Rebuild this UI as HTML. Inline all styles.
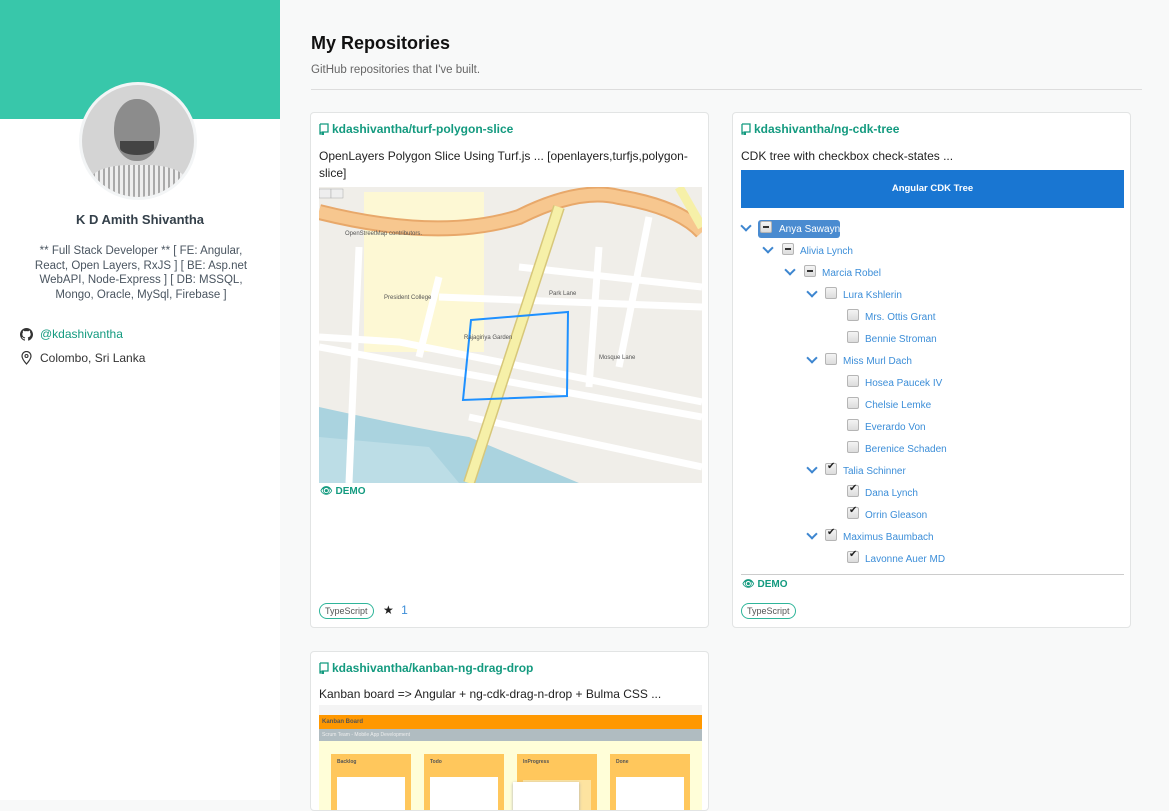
<!DOCTYPE html>
<html><head><meta charset="utf-8">
<style>
*{margin:0;padding:0;box-sizing:border-box}
body{width:1169px;height:800px;overflow:hidden;background:#f8f9f9;font-family:"Liberation Sans",sans-serif;position:relative;color:#222}
.abs{position:absolute}
.side{left:0;top:0;width:280px;height:800px;background:#fff}
.teal{left:0;top:0;width:280px;height:119px;background:#38c7aa}
.card{position:absolute;background:#fff;border:1px solid #e2e4e4;border-radius:4px;overflow:hidden}
.ttl{position:absolute;left:8px;top:9px;font-size:12px;font-weight:bold;color:#139a7f}
.ttl svg{vertical-align:-2px;margin-right:3px}
.desc{position:absolute;left:8px;font-size:12px;line-height:17px;color:#222}
.tag{position:absolute;font-size:9px;color:#555;border:1px solid #2fb59a;border-radius:9px;padding:2px 5px}
.demo{position:absolute;font-size:10px;font-weight:bold;color:#139a7f}
.row{position:absolute;height:16px;font-size:10px;color:#3c8ed8;line-height:14px;white-space:nowrap}
.cb{position:absolute;width:12px;height:12px;border:1px solid #b5b5b5;border-radius:2px;background:linear-gradient(#f4f4f4,#dcdcdc)}
.cb.ind:after{content:"";position:absolute;left:2px;top:4px;width:6px;height:2px;background:#333}
.cb.chk:after{content:"✔";position:absolute;left:1px;top:-3px;font-size:10px;color:#222}
.chev{position:absolute;width:8px;height:8px;border-right:2px solid #3d86d0;border-bottom:2px solid #3d86d0;transform:rotate(45deg)}
</style></head><body>
<div class="abs side"></div>
<div class="abs teal"></div>
<div class="abs" style="left:79px;top:82px;width:118px;height:118px;border-radius:50%;background:#f3f5f6"></div>
<div class="abs" style="left:82px;top:85px;width:112px;height:112px;border-radius:50%;background:#d4d4d4;overflow:hidden">
 <div class="abs" style="left:32px;top:14px;width:46px;height:62px;border-radius:48%;background:#8c8c8c"></div>
 <div class="abs" style="left:38px;top:56px;width:34px;height:14px;border-radius:0 0 50% 50%;background:#444"></div>
 <div class="abs" style="left:8px;top:80px;width:96px;height:40px;border-radius:40% 40% 0 0;background:repeating-linear-gradient(90deg,#eee 0 3px,#aaa 3px 5px)"></div>
</div>
<div class="abs" style="left:0;width:280px;top:212px;text-align:center;font-size:13px;font-weight:bold;color:#34404a">K D Amith Shivantha</div>
<div class="abs" style="left:30px;width:222px;top:244px;text-align:center;font-size:11.5px;line-height:14.5px;color:#4a5560">** Full Stack Developer ** [ FE: Angular, React, Open Layers, RxJS ] [ BE: Asp.net WebAPI, Node-Express ] [ DB: MSSQL, Mongo, Oracle, MySql, Firebase ]</div>
<svg class="abs" style="left:20px;top:328px" width="13" height="13" viewBox="0 0 16 16"><path fill="#333" d="M8 0C3.6 0 0 3.6 0 8c0 3.5 2.3 6.5 5.5 7.6.4.1.5-.2.5-.4v-1.4c-2.2.5-2.7-1-2.7-1-.4-.9-.9-1.200-.9-1.2-.7-.5.1-.5.1-.5.8.1 1.2.8 1.2.8.7 1.2 1.9.9 2.3.7.1-.5.3-.9.5-1.1-1.8-.2-3.600-.9-3.6-4 0-.9.3-1.6.8-2.100-.1-.2-.4-1 .1-2.1 0 0 .7-.2 2.2.8.6-.2 1.3-.3 2-.3s1.4.1 2 .3c1.5-1 2.2-.8 2.2-.8.4 1.1.2 1.9.1 2.1.5.6.8 1.3.8 2.1 0 3.1-1.9 3.7-3.6 3.9.3.3.5.8.5 1.5v2.2c0 .2.1.5.6.4C13.7 14.5 16 11.5 16 8c0-4.4-3.6-8-8-8z"/></svg>
<div class="abs" style="left:40px;top:327px;font-size:12px;color:#139a7f">@kdashivantha</div>
<svg class="abs" style="left:21px;top:351px" width="11" height="14" viewBox="0 0 11 14"><path d="M5.5 13S1 8 1 5a4.5 4.5 0 0 1 9 0c0 3-4.5 8-4.5 8z" fill="none" stroke="#333" stroke-width="1.2"/><circle cx="5.5" cy="5" r="1.5" fill="none" stroke="#333" stroke-width="1.1"/></svg>
<div class="abs" style="left:40px;top:351px;font-size:12px;color:#333">Colombo, Sri Lanka</div>

<div class="abs" style="left:311px;top:33px;font-size:18px;font-weight:bold;color:#111">My Repositories</div>
<div class="abs" style="left:311px;top:64px;font-size:11.5px;color:#666">GitHub repositories that I've built.</div>
<div class="abs" style="left:311px;top:89px;width:831px;height:1px;background:#ddd"></div>

<!-- card 1 -->
<div class="card" style="left:310px;top:112px;width:399px;height:516px">
 <div class="ttl"><svg width="10" height="12" viewBox="0 0 10 12"><path d="M1 1h8v8H2.5M1 1v10h2M1 9.5h1.5" fill="none" stroke="#139a7f" stroke-width="1.3"/><rect x="3" y="9" width="2" height="3" fill="#139a7f"/></svg>kdashivantha/turf-polygon-slice</div>
 <div class="desc" style="top:35px;width:380px">OpenLayers Polygon Slice Using Turf.js ... [openlayers,turfjs,polygon-slice]</div>
 <svg class="abs" style="left:8px;top:74px" width="383" height="296" viewBox="0 0 383 296">
  <rect width="383" height="296" fill="#f0eee9"/>
  <rect x="45" y="5" width="120" height="160" fill="#fdf8d4"/>
  <path d="M0 220 Q90 240 150 250 L260 296 L0 296Z" fill="#aad3df"/>
  <path d="M0 250 L110 260 L140 296 L0 296Z" fill="#bcdde6"/>
  <g stroke="#fff" stroke-width="7" fill="none">
   <path d="M0 160 L383 230"/><path d="M0 150 L80 155 L383 215"/><path d="M120 110 L383 120"/><path d="M40 60 L30 296"/><path d="M280 60 L270 200"/><path d="M200 80 L383 100"/><path d="M100 170 L120 90"/><path d="M330 30 L300 180"/><path d="M150 230 L383 280"/>
  </g>
  <path d="M0 25 Q120 55 200 30 Q260 0 300 10 Q360 20 383 45" stroke="#e8a86a" stroke-width="16" fill="none"/>
  <path d="M0 25 Q120 55 200 30 Q260 0 300 10 Q360 20 383 45" stroke="#f7c78f" stroke-width="12" fill="none"/>
  <path d="M240 20 L150 296" stroke="#d7c77a" stroke-width="12" fill="none"/>
  <path d="M240 20 L150 296" stroke="#f6f0a8" stroke-width="9" fill="none"/>
  <path d="M360 0 L383 40" stroke="#f6f0a8" stroke-width="9" fill="none"/>
  <path d="M152 133 L249 125 L248 209 L144 213Z" fill="none" stroke="#1e90ff" stroke-width="2"/>
  <g font-size="6" fill="#555" font-family="Liberation Sans"><text x="145" y="152">Rajagiriya Garden</text><text x="65" y="112">President College</text><text x="230" y="108">Park Lane</text><text x="280" y="172">Mosque Lane</text><text x="26" y="48">OpenStreetMap contributors.</text></g>
  <rect x="0" y="2" width="12" height="9" fill="#eee" stroke="#aaa" stroke-width=".5"/><rect x="12" y="2" width="12" height="9" fill="#eee" stroke="#aaa" stroke-width=".5"/>
 </svg>
 <div class="demo" style="left:9px;top:373px">👁 DEMO</div>
 <div class="tag" style="left:8px;top:490px">TypeScript</div>
 <div class="abs" style="left:72px;top:490px;font-size:12px">★ <span style="color:#3c8ed8;margin-left:4px">1</span></div>
</div>

<!-- card 2 -->
<div class="card" style="left:732px;top:112px;width:399px;height:516px">
 <div class="ttl"><svg width="10" height="12" viewBox="0 0 10 12"><path d="M1 1h8v8H2.5M1 1v10h2M1 9.5h1.5" fill="none" stroke="#139a7f" stroke-width="1.3"/><rect x="3" y="9" width="2" height="3" fill="#139a7f"/></svg>kdashivantha/ng-cdk-tree</div>
 <div class="desc" style="top:35px">CDK tree with checkbox check-states ...</div>
 <div class="abs" style="left:8px;top:57px;width:383px;height:38px;background:#1976d2;color:#fff;font-size:9.5px;font-weight:bold;text-align:center;line-height:38px">Angular CDK Tree</div>
 <div class="abs" style="left:8px;top:461px;width:383px;height:1px;background:#ccc"></div>
 <div class="demo" style="left:9px;top:466px">👁 DEMO</div>
 <div class="tag" style="left:8px;top:490px">TypeScript</div>
</div>
<!-- tree (page coords) -->
<div class="abs" style="left:758px;top:220px;width:82px;height:18px;background:#4a8bd0;border-radius:3px"></div>
<div class="abs" style="left:0;top:0">
 <div class="chev" style="left:742px;top:222px"></div><div class="cb ind" style="left:760px;top:221px"></div><div class="row" style="left:779px;top:223px;color:#fff">Anya Sawayn</div>
 <div class="chev" style="left:764px;top:244px"></div><div class="cb ind" style="left:782px;top:243px"></div><div class="row" style="left:800px;top:245px">Alivia Lynch</div>
 <div class="chev" style="left:786px;top:266px"></div><div class="cb ind" style="left:804px;top:265px"></div><div class="row" style="left:822px;top:267px">Marcia Robel</div>
 <div class="chev" style="left:808px;top:288px"></div><div class="cb" style="left:825px;top:287px"></div><div class="row" style="left:843px;top:289px">Lura Kshlerin</div>
 <div class="cb" style="left:847px;top:309px"></div><div class="row" style="left:865px;top:311px">Mrs. Ottis Grant</div>
 <div class="cb" style="left:847px;top:331px"></div><div class="row" style="left:865px;top:333px">Bennie Stroman</div>
 <div class="chev" style="left:808px;top:354px"></div><div class="cb" style="left:825px;top:353px"></div><div class="row" style="left:843px;top:355px">Miss Murl Dach</div>
 <div class="cb" style="left:847px;top:375px"></div><div class="row" style="left:865px;top:377px">Hosea Paucek IV</div>
 <div class="cb" style="left:847px;top:397px"></div><div class="row" style="left:865px;top:399px">Chelsie Lemke</div>
 <div class="cb" style="left:847px;top:419px"></div><div class="row" style="left:865px;top:421px">Everardo Von</div>
 <div class="cb" style="left:847px;top:441px"></div><div class="row" style="left:865px;top:443px">Berenice Schaden</div>
 <div class="chev" style="left:808px;top:464px"></div><div class="cb chk" style="left:825px;top:463px"></div><div class="row" style="left:843px;top:465px">Talia Schinner</div>
 <div class="cb chk" style="left:847px;top:485px"></div><div class="row" style="left:865px;top:487px">Dana Lynch</div>
 <div class="cb chk" style="left:847px;top:507px"></div><div class="row" style="left:865px;top:509px">Orrin Gleason</div>
 <div class="chev" style="left:808px;top:530px"></div><div class="cb chk" style="left:825px;top:529px"></div><div class="row" style="left:843px;top:531px">Maximus Baumbach</div>
 <div class="cb chk" style="left:847px;top:551px"></div><div class="row" style="left:865px;top:553px">Lavonne Auer MD</div>
</div>

<!-- card 3 -->
<div class="card" style="left:310px;top:651px;width:399px;height:160px">
 <div class="ttl"><svg width="10" height="12" viewBox="0 0 10 12"><path d="M1 1h8v8H2.5M1 1v10h2M1 9.5h1.5" fill="none" stroke="#139a7f" stroke-width="1.3"/><rect x="3" y="9" width="2" height="3" fill="#139a7f"/></svg>kdashivantha/kanban-ng-drag-drop</div>
 <div class="desc" style="top:34px">Kanban board =&gt; Angular + ng-cdk-drag-n-drop + Bulma CSS ...</div>
 <div class="abs" style="left:8px;top:53px;width:383px;height:10px;background:#f4f4f4"></div>
 <div class="abs" style="left:8px;top:63px;width:383px;height:14px;background:#ff9800;font-size:6px;font-weight:bold;color:#555;line-height:14px;padding-left:3px">Kanban Board</div>
 <div class="abs" style="left:8px;top:77px;width:383px;height:12px;background:#b0bcc1;font-size:5px;color:#eee;line-height:12px;padding-left:3px">Scrum Team - Mobile App Development</div>
 <div class="abs" style="left:8px;top:89px;width:383px;height:80px;background:#fffed8"></div>
 <div class="abs" style="left:20px;top:102px;width:80px;height:60px;background:#ffc75c"></div>
 <div class="abs" style="left:113px;top:102px;width:80px;height:60px;background:#ffc75c"></div>
 <div class="abs" style="left:206px;top:102px;width:80px;height:60px;background:#ffc75c"></div>
 <div class="abs" style="left:299px;top:102px;width:80px;height:60px;background:#ffc75c"></div>
 <div class="abs" style="left:26px;top:125px;width:68px;height:40px;background:#fff"></div>
 <div class="abs" style="left:119px;top:125px;width:68px;height:40px;background:#fff"></div>
 <div class="abs" style="left:212px;top:128px;width:68px;height:40px;background:#fde3a0"></div>
 <div class="abs" style="left:202px;top:130px;width:66px;height:40px;background:#fff;box-shadow:0 1px 3px #aaa"></div>
 <div class="abs" style="left:305px;top:125px;width:68px;height:40px;background:#fff"></div>
 <div class="abs" style="left:26px;top:107px;font-size:5px;color:#555;font-weight:bold">Backlog</div>
 <div class="abs" style="left:119px;top:107px;font-size:5px;color:#555;font-weight:bold">Todo</div>
 <div class="abs" style="left:212px;top:107px;font-size:5px;color:#555;font-weight:bold">InProgress</div>
 <div class="abs" style="left:305px;top:107px;font-size:5px;color:#555;font-weight:bold">Done</div>
</div>
</body></html>
